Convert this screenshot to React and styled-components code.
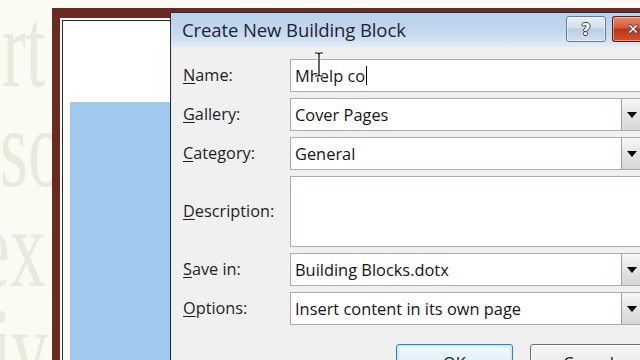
import React from "react"
import styled, { createGlobalStyle } from "styled-components"

const Global = createGlobalStyle`
  html, body {
    margin: 0;
    padding: 0;
    overflow: hidden;
  }
  body {
    font-family: "Open Sans", "Noto Sans", sans-serif;
  }
`

const Page = styled.div`
  position: relative;
  display: flex;
  width: 640px;
  height: 360px;
  overflow: hidden;
  background: #fbfbf4;
`

const Margin = styled.div`
  flex: none;
  width: 52px;
  overflow: hidden;
  font-family: "Liberation Serif", serif;
  font-size: 112px;
  line-height: 100px;
  color: #e9eadd;
  margin-top: -2px;
`

const Ghost = styled.div`
  height: 100px;
  white-space: nowrap;
  transform: scaleX(0.64);
  transform-origin: left center;
  margin-left: ${(p) => p.$shift}px;
`

const Frame = styled.div`
  flex: 1;
  height: 420px;
  margin-top: 8px;
  border-style: solid;
  border-color: #6b2a21;
  border-width: 10px 0 0 8px;
  padding: 2px 0 0 2px;
  background: #fff;
`

const Sheet = styled.div`
  height: 100%;
  border-top: 1px solid #4a1e18;
  border-left: 1px solid #4a1e18;
  background: #fff;
  padding: 81px 0 0 7px;
  box-sizing: border-box;
`

const Shade = styled.div`
  height: 100%;
  background: #a1c8ed;
`

const Dialog = styled.div`
  position: absolute;
  left: 170px;
  top: 12px;
  width: 470px;
  height: 380px;
  background: #f0f0f0;
  border-left: 1px solid #26303c;
  border-top: 1px solid #26303c;
  box-shadow: inset 1px 0 0 #dfe6ee;
`

const TitleBar = styled.div`
  display: flex;
  align-items: flex-start;
  gap: 6px;
  height: 34px;
  padding-left: 11px;
  background: linear-gradient(#b9d1ea 0%, #c4d8ee 55%, #d6e4f3 85%, #e4edf7 100%);
`

const Title = styled.div`
  flex: 1;
  font-size: 18.5px;
  line-height: 34px;
  color: #1a2535;
  letter-spacing: -0.1px;
`

const CaptionButton = styled.div`
  flex: none;
  display: flex;
  align-items: center;
  justify-content: center;
  margin-top: 3px;
  width: ${(p) => (p.$danger ? 29 : 40)}px;
  height: 26px;
  box-sizing: border-box;
  border: 1px solid ${(p) => (p.$danger ? "#5e1d10" : "#6b7c92")};
  border-right-width: ${(p) => (p.$danger ? 0 : 1)}px;
  border-radius: ${(p) => (p.$danger ? "3px 0 0 3px" : "3px")};
  background: ${(p) =>
    p.$danger
      ? "linear-gradient(#e58a6e 0%, #d35a38 45%, #bd3416 50%, #d24f2a 100%)"
      : "linear-gradient(#e6eef7 0%, #d3e0ee 45%, #bccde2 50%, #d2dfee 100%)"};
  box-shadow: inset 0 0 0 1px rgba(255, 255, 255, 0.45);
  font-family: "DejaVu Sans", sans-serif;
  font-weight: bold;
  font-size: ${(p) => (p.$danger ? 14 : 16)}px;
  color: #fff;
  text-shadow: 1px 0 0 #33425a, -1px 0 0 #33425a, 0 1px 0 #33425a, 0 -1px 0 #33425a;
  padding-left: ${(p) => (p.$danger ? 12 : 0)}px;
  overflow: hidden;
`

const Body = styled.div`
  padding: 12px 0 0 12px;
`

const Form = styled.div`
  display: grid;
  grid-template-columns: 107px 353px;
  row-gap: 6px;
  align-items: center;
`

const Label = styled.div`
  font-size: 16.3px;
  color: #1e1e1e;
  margin-top: -2px;
  u {
    text-decoration-thickness: 1px;
    text-underline-offset: 2px;
  }
`

const Field = styled.div`
  display: flex;
  align-items: center;
  height: ${(p) => (p.$tall ? 71 : 33)}px;
  box-sizing: border-box;
  border: 1px solid #a7adb5;
  background: #fff;
  padding-left: 4px;
  font-size: 16.4px;
  color: #151515;
`

const Caret = styled.span`
  display: inline-block;
  width: 1px;
  height: 19px;
  margin-left: 1px;
  background: #000;
`

const DropButton = styled.div`
  display: flex;
  align-items: center;
  justify-content: center;
  align-self: stretch;
  width: 20px;
  margin-left: auto;
  border-left: 1px solid #9ba2aa;
  background: linear-gradient(#f7f7f7, #e4e4e4 50%, #d6d6d6);
  &::after {
    content: "";
    border-left: 5px solid transparent;
    border-right: 5px solid transparent;
    border-top: 6px solid #000;
  }
`

const ButtonRow = styled.div`
  display: flex;
  gap: 17px;
  margin-top: 19px;
  padding-left: 213px;
`

const Button = styled.div`
  flex: none;
  width: 117px;
  height: 36px;
  box-sizing: border-box;
  display: flex;
  align-items: center;
  justify-content: center;
  border: 1px solid ${(p) => (p.$primary ? "#3c7fb1" : "#707070")};
  border-radius: 3px;
  background: ${(p) =>
    p.$primary
      ? "linear-gradient(#f2f9fd, #e0f1fb 50%, #cde9f9)"
      : "linear-gradient(#f5f5f5, #ececec 50%, #dedede)"};
  box-shadow: ${(p) => (p.$primary ? "inset 0 0 0 2px #c9ecfb" : "inset 0 0 0 1px #fbfbfb")};
  font-size: 16.4px;
  color: #151515;
`

const Pointer = styled.svg`
  position: absolute;
  left: 313px;
  top: 52px;
`

const rows = [
  { key: "N", rest: "ame:", value: "Mhelp co", input: true },
  { key: "G", rest: "allery:", value: "Cover Pages" },
  { key: "C", rest: "ategory:", value: "General" },
  { key: "D", rest: "escription:", tall: true },
  { key: "S", rest: "ave in:", value: "Building Blocks.dotx" },
  { key: "O", rest: "ptions:", value: "Insert content in its own page" },
]

export default function App() {
  return (
    <Page>
      <Global />
      <Margin>
        <Ghost $shift={2}>rt</Ghost>
        <Ghost $shift={0}>so</Ghost>
        <Ghost $shift={-22}>ex</Ghost>
        <Ghost $shift={-8}>iva</Ghost>
      </Margin>
      <Frame>
        <Sheet>
          <Shade />
        </Sheet>
      </Frame>
      <Dialog>
        <TitleBar>
          <Title>Create New Building Block</Title>
          <CaptionButton>?</CaptionButton>
          <CaptionButton $danger>✕</CaptionButton>
        </TitleBar>
        <Body>
          <Form>
            {rows.map((r) => (
              <React.Fragment key={r.key}>
                <Label>
                  <u>{r.key}</u>
                  {r.rest}
                </Label>
                <Field $tall={r.tall}>
                  {r.value}
                  {r.input && <Caret />}
                  {!r.input && !r.tall && <DropButton />}
                </Field>
              </React.Fragment>
            ))}
          </Form>
          <ButtonRow>
            <Button $primary>OK</Button>
            <Button>Cancel</Button>
          </ButtonRow>
        </Body>
      </Dialog>
      <Pointer width="12" height="26" viewBox="0 0 12 26">
        <path d="M2 1h3l1 1 1-1h3M6 2v21M2 24h3l1-1 1 1h3" fill="none" stroke="#fff" strokeWidth="3" />
        <path d="M2 1h3l1 1 1-1h3M6 2v21M2 24h3l1-1 1 1h3" fill="none" stroke="#000" strokeWidth="1.2" />
      </Pointer>
    </Page>
  )
}
